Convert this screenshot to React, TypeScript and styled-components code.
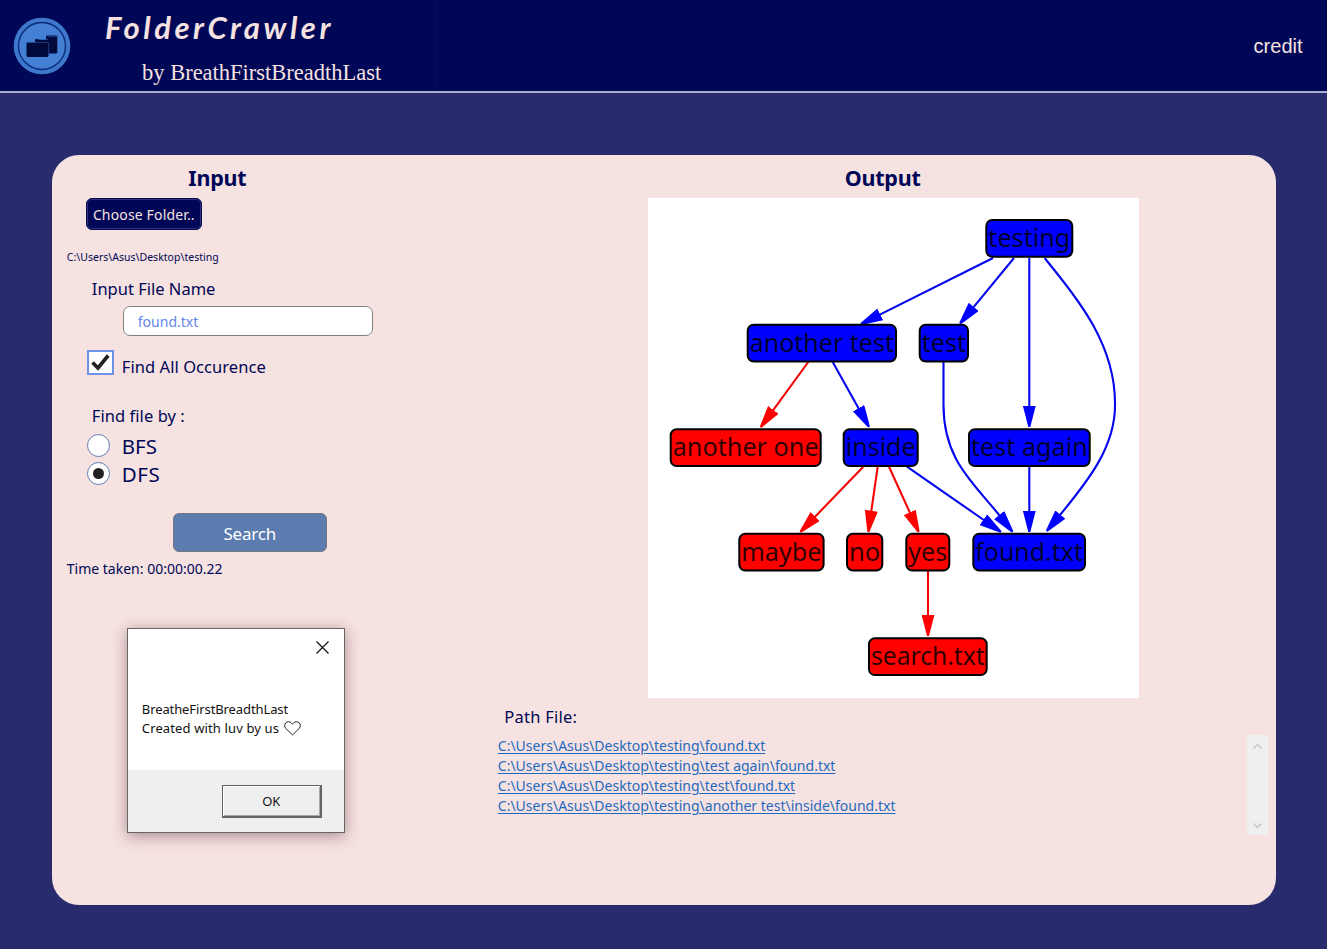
import React from "react";
import styled, { createGlobalStyle } from "styled-components";

const navy = "#000757";

const GlobalStyle = createGlobalStyle`
  * { box-sizing: border-box; }
  html, body { margin: 0; padding: 0; }
  body {
    background: #292c6c;
    color: ${navy};
    font-family: "Noto Sans", "Open Sans", sans-serif;
    overflow: hidden;
  }
`;

const Page = styled.div`
  width: 1327px;
  height: 949px;
  background: #292c6c;
`;

const Header = styled.header`
  display: flex;
  align-items: flex-start;
  height: 93px;
  background: ${navy};
  border-bottom: 2px solid #a9acd0;
`;

const Logo = styled.svg`
  flex: none;
  width: 58px;
  height: 58px;
  margin: 17px 0 0 13px;
`;

const Brand = styled.div`
  display: flex;
  flex-direction: column;
  width: 365px;
  height: 91px;
  padding: 8px 0 0 34px;
  border-right: 1px solid #090f5c;
  color: #f6e2e0;
  white-space: nowrap;
`;

const Title = styled.h1`
  margin: 0;
  font: italic 700 31px/38px Lato, sans-serif;
  letter-spacing: 3.5px;
`;

const Byline = styled.p`
  margin: 14px 0 0 37px;
  font: 22.5px/26px "Liberation Serif", serif;
`;

const Credit = styled.a`
  margin: 34px 24.5px 0 auto;
  color: #f6e2e0;
  font: 20px/24px "Liberation Sans", sans-serif;
`;

const Card = styled.main`
  display: grid;
  grid-template-columns: 446px 1fr;
  width: 1224.5px;
  height: 750px;
  margin: 62px 0 0 51.8px;
  border-radius: 27px;
  background: #f6e2e0;
`;

const InputColumn = styled.section`
  display: flex;
  flex-direction: column;
  align-items: flex-start;
  padding-left: 15px;
`;

const OutputColumn = styled.section`
  display: flex;
  flex-direction: column;
  align-items: flex-start;
`;

const Heading = styled.h2<{ $indent: number }>`
  margin: 9px 0 0 ${(p) => p.$indent}px;
  font-size: 21.5px;
  line-height: 28px;
  font-weight: 700;
  letter-spacing: -0.25px;
`;

const Label = styled.div<{ $size: number; $top: number; $left?: number; $track?: number }>`
  margin: ${(p) => p.$top}px 0 0 ${(p) => p.$left ?? 0}px;
  font-size: ${(p) => p.$size}px;
  line-height: 20px;
  letter-spacing: ${(p) => p.$track ?? 0}px;
  white-space: nowrap;
`;

const FolderButton = styled.button`
  width: 116px;
  height: 32px;
  margin: 6px 0 0 19px;
  padding: 1px 0 0;
  border: 1px solid ${navy};
  border-radius: 6px;
  box-shadow: inset 0 0 0 1px #30356f;
  background: ${navy};
  color: #f6e2e0;
  font: 14px/28px "Noto Sans", sans-serif;
  letter-spacing: 0.15px;
  white-space: nowrap;
`;

const FileInput = styled.input`
  width: 250px;
  height: 30px;
  margin: 7px 0 0 56px;
  padding: 1px 14px 0;
  border: 1px solid #808080;
  border-radius: 7px;
  background: #fff;
  color: #6487ea;
  font: 14px "Noto Sans", sans-serif;
`;

const CheckRow = styled.label`
  display: flex;
  height: 26px;
  margin: 14px 0 0 20px;
`;

const CheckBox = styled.span`
  width: 27px;
  height: 25px;
  border: 2px solid #6e91ea;
  background: #fff;
  svg { display: block; width: 23px; height: 21px; }
`;

const RadioGroup = styled.div`
  display: flex;
  flex-direction: column;
  margin: 5px 0 0 20px;
`;

const RadioRow = styled.label<{ $track: number }>`
  display: flex;
  align-items: center;
  gap: 12px;
  height: 28px;
  font-size: 20.5px;
  letter-spacing: ${(p) => p.$track}px;
  span:last-child { line-height: 28px; padding-top: 2px; }
`;

const Radio = styled.span<{ $checked?: boolean }>`
  display: grid;
  place-items: center;
  width: 23px;
  height: 23px;
  border: 1.6px solid #5e7db1;
  border-radius: 50%;
  background: #fff;
  &::after {
    content: "";
    width: 11px;
    height: 11px;
    border-radius: 50%;
    background: ${(p) => (p.$checked ? "#212121" : "transparent")};
  }
`;

const SearchButton = styled.button`
  width: 154px;
  height: 39px;
  margin: 26px 0 0 106px;
  padding: 1px 0 0;
  border: 1px solid #75757d;
  border-radius: 6px;
  background: #5c7cb0;
  color: #fff;
  font: 17px "Noto Sans", sans-serif;
  letter-spacing: -0.2px;
`;

const Dialog = styled.div`
  display: flex;
  flex-direction: column;
  width: 218px;
  height: 205px;
  margin: 49px 0 0 60px;
  border: 1px solid #6a6466;
  background: #fff;
  box-shadow: 0 3px 14px rgba(60, 20, 30, 0.42);
  color: #111;
`;

const CloseIcon = styled.svg`
  width: 13px;
  height: 13px;
  margin: 12px 15px 0 auto;
`;

const Message = styled.div`
  height: 116px;
  padding: 46px 14px 0;
  font-size: 13px;
  line-height: 19px;
  white-space: nowrap;
`;

const Line = styled.div<{ $track: number }>`
  display: flex;
  align-items: center;
  gap: 5px;
  letter-spacing: ${(p) => p.$track}px;
`;

const DialogFooter = styled.div`
  display: flex;
  justify-content: flex-end;
  flex: 1;
  padding: 15px 22px 0 0;
  background: #efefef;
`;

const OkButton = styled.button`
  width: 100px;
  height: 33px;
  padding: 0;
  border: 1px solid #646464;
  border-right-width: 2px;
  border-bottom-width: 2px;
  box-shadow: inset 1px 1px 0 #fff, inset -1px -1px 0 #a8a8a8;
  background: #efefef;
  color: #111;
  font: 13px "Noto Sans", sans-serif;
`;

const Graph = styled.svg`
  display: block;
  width: 491.5px;
  height: 499.5px;
  margin: 6px 0 0 150.2px;
  background: #fff;
`;

const Results = styled.div`
  display: flex;
  justify-content: space-between;
  width: 770px;
  margin-top: 8px;
`;

const LinkList = styled.div`
  display: flex;
  flex-direction: column;
  align-items: flex-start;
  padding-top: 1px;
`;

const PathLink = styled.a`
  color: #1f6abf;
  font-size: 14px;
  line-height: 20px;
  text-decoration: underline;
  text-decoration-thickness: 1px;
  text-underline-offset: 2px;
  white-space: nowrap;
`;

const Scrollbar = styled.div`
  display: flex;
  flex-direction: column;
  justify-content: space-between;
  align-items: center;
  width: 21px;
  height: 100px;
  padding: 8px 0 6px;
  background: #efefef;
  svg { width: 9px; height: 7px; }
`;

type Tone = "blue" | "red";
const fill: Record<Tone, string> = { blue: "#0000ff", red: "#ff0000" };

const edges: { d: string; tone: Tone }[] = [
  { d: "M345 60L231.8 116.6", tone: "blue" },
  { d: "M366 60L325.4 109.3", tone: "blue" },
  { d: "M381.3 60V208", tone: "blue" },
  { d: "M396.7 60C420 90 467 140 467 205C468 248 440 283 412 317", tone: "blue" },
  { d: "M295.5 164V207C295.5 262 325 284 351.5 317.5", tone: "blue" },
  { d: "M160.3 164L125 212.3", tone: "red" },
  { d: "M184.7 164L210.8 210.7", tone: "blue" },
  { d: "M215.3 268.7L166.9 318.9", tone: "red" },
  { d: "M229.7 268.7L223.3 313.2", tone: "red" },
  { d: "M241 268.7L262 314.9", tone: "red" },
  { d: "M259 268.7L335.8 322", tone: "blue" },
  { d: "M381.3 268.7V313", tone: "blue" },
  { d: "M280 373V417", tone: "red" },
];

const nodes: { name: string; x: number; y: number; w: number; tone: Tone }[] = [
  { name: "testing", x: 338.3, y: 22, w: 86, tone: "blue" },
  { name: "another test", x: 99.7, y: 126.7, w: 148.3, tone: "blue" },
  { name: "test", x: 271.7, y: 126.7, w: 48.3, tone: "blue" },
  { name: "another one", x: 22.7, y: 231.3, w: 150, tone: "red" },
  { name: "inside", x: 195.7, y: 231.3, w: 74, tone: "blue" },
  { name: "test again", x: 321, y: 231.3, w: 120.7, tone: "blue" },
  { name: "maybe", x: 91.3, y: 335.7, w: 84.3, tone: "red" },
  { name: "no", x: 199, y: 335.7, w: 35.3, tone: "red" },
  { name: "yes", x: 258.3, y: 335.7, w: 43, tone: "red" },
  { name: "found.txt", x: 325.3, y: 335.7, w: 111.7, tone: "blue" },
  { name: "search.txt", x: 221, y: 440.3, w: 117.7, tone: "red" },
];

function FolderGraph() {
  return (
    <Graph viewBox="0 0 491.5 499.5">
      <defs>
        {(["blue", "red"] as Tone[]).map((tone) => (
          <marker
            key={tone}
            id={`head-${tone}`}
            markerUnits="userSpaceOnUse"
            markerWidth="22"
            markerHeight="13"
            refX="0.5"
            refY="6.5"
            orient="auto"
          >
            <path d="M0 0L21.5 5.5V7.5L0 13Z" fill={fill[tone]} />
          </marker>
        ))}
      </defs>
      {edges.map((e) => (
        <path
          key={e.d}
          d={e.d}
          fill="none"
          stroke={e.tone === "blue" ? "#0505ee" : "#f50505"}
          strokeWidth="2.1"
          markerEnd={`url(#head-${e.tone})`}
        />
      ))}
      {nodes.map((n) => (
        <g key={n.name}>
          <rect x={n.x} y={n.y} width={n.w} height="36.8" rx="6" fill={fill[n.tone]} stroke="#000" strokeWidth="2" />
          <text
            x={n.x + 2}
            y={n.y + 26.8}
            fontFamily="Noto Sans, sans-serif"
            fontSize="25"
            fill="#000"
            fillOpacity="0.84"
            textLength={n.w - 4}
            lengthAdjust="spacingAndGlyphs"
          >
            {n.name}
          </text>
        </g>
      ))}
    </Graph>
  );
}

const paths = [
  "C:\\Users\\Asus\\Desktop\\testing\\found.txt",
  "C:\\Users\\Asus\\Desktop\\testing\\test again\\found.txt",
  "C:\\Users\\Asus\\Desktop\\testing\\test\\found.txt",
  "C:\\Users\\Asus\\Desktop\\testing\\another test\\inside\\found.txt",
];

export default function App() {
  return (
    <Page>
      <GlobalStyle />
      <Header>
        <Logo viewBox="0 0 58 58">
          <circle cx="29" cy="29" r="28.3" fill="#3d78cc" />
          <circle cx="29" cy="29" r="23.5" fill="#4380d3" stroke="#0b2a78" strokeWidth="1.4" />
          <path d="M33 21v-1.500q0-1 1-1H43.500q.8 0 .8 1V35q0 1.400-1 1.400H36z" fill="#020a3c" />
          <path d="M22 25v-2q0-1 1-1h3l1 1h8q1 0 1 1v12z" fill="#020a3c" />
          <path d="M13.500 26.500q0-1 1-1H34.500q1 0 1 1V38.500q0 1.400-1.200 1.400H14.700q-1.200 0-1.200-1.400z" fill="#020a3c" />
          <path d="M15 25.400H34.600q1.100 0 1.100 1.200V38M24.500 22.500h10.500M34.500 19.700H44" fill="none" stroke="#24509d" strokeWidth=".7" />
        </Logo>
        <Brand>
          <Title>FolderCrawler</Title>
          <Byline>by BreathFirstBreadthLast</Byline>
        </Brand>
        <Credit>credit</Credit>
      </Header>
      <Card>
        <InputColumn>
          <Heading $indent={121.5}>Input</Heading>
          <FolderButton>Choose Folder..</FolderButton>
          <Label $size={10.5} $top={17} $track={0.02}>C:\Users\Asus\Desktop\testing</Label>
          <Label $size={16.5} $top={12} $left={25}>Input File Name</Label>
          <FileInput defaultValue="found.txt" />
          <CheckRow>
            <CheckBox>
              <svg viewBox="0 0 23 21">
                <path d="M3.500 10.500L9 16L19.200 3.500" fill="none" stroke="#212121" strokeWidth="3.600" />
              </svg>
            </CheckBox>
            <Label $size={16.5} $top={7} $left={8} $track={0.06}>Find All Occurence</Label>
          </CheckRow>
          <Label $size={16.5} $top={30} $left={25} $track={0.06}>Find file by :</Label>
          <RadioGroup>
            <RadioRow $track={0}>
              <Radio />
              <span>BFS</span>
            </RadioRow>
            <RadioRow $track={0.5}>
              <Radio $checked />
              <span>DFS</span>
            </RadioRow>
          </RadioGroup>
          <SearchButton>Search</SearchButton>
          <Label $size={14} $top={7}>Time taken: 00:00:00.22</Label>
          <Dialog>
            <CloseIcon viewBox="0 0 13 13">
              <path d="M.5 .5L12.500 12.500M12.500 .5L.5 12.500" stroke="#111" strokeWidth="1.200" />
            </CloseIcon>
            <Message>
              <Line $track={-0.1}>BreatheFirstBreadthLast</Line>
              <Line $track={0.13}>
                Created with luv by us
                <svg width="17" height="15" viewBox="0 0 17 15">
                  <path
                    d="M8.500 13.900L1.800 7.500C.2 5.800.4 3.200 1.700 1.900C3.400.2 6 .4 7.200 1.800L8.500 3.200L9.800 1.800C11 .4 13.600.2 15.300 1.900C16.600 3.200 16.800 5.800 15.200 7.500Z"
                    fill="none"
                    stroke="#222"
                    strokeWidth="1"
                  />
                </svg>
              </Line>
            </Message>
            <DialogFooter>
              <OkButton>OK</OkButton>
            </DialogFooter>
          </Dialog>
        </InputColumn>
        <OutputColumn>
          <Heading $indent={347}>Output</Heading>
          <FolderGraph />
          <Label $size={16.5} $top={9} $left={6.5} $track={0.25}>Path File:</Label>
          <Results>
            <LinkList>
              {paths.map((p) => (
                <PathLink key={p}>{p}</PathLink>
              ))}
            </LinkList>
            <Scrollbar>
              <svg viewBox="0 0 9 7"><path d="M.5 5.500L4.500 1.500L8.500 5.500" fill="none" stroke="#c6c6c6" strokeWidth="1.500" /></svg>
              <svg viewBox="0 0 9 7"><path d="M.5 1.500L4.500 5.500L8.500 1.500" fill="none" stroke="#c6c6c6" strokeWidth="1.500" /></svg>
            </Scrollbar>
          </Results>
        </OutputColumn>
      </Card>
    </Page>
  );
}
